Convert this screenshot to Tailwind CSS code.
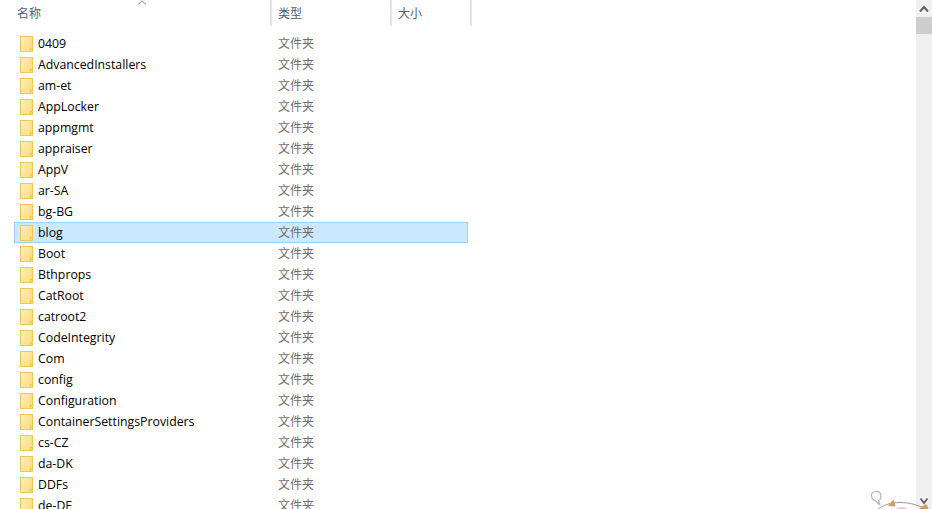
<!DOCTYPE html>
<html lang="zh-CN">
<head>
    <meta charset="UTF-8">
    <title>文件列表</title>
    <script src="https://cdn.jsdelivr.net/npm/@tailwindcss/browser@4"></script>
</head>
<body class="bg-white h-[509px] overflow-hidden relative font-['Open_Sans','Noto_Sans_CJK_SC',sans-serif] text-[12px]">
    <svg class="absolute" width="0" height="0"><defs><linearGradient id="folder-fill" x1="0" y1="0" x2="1" y2="0.600"><stop offset="0" stop-color="#fdf0c0"/><stop offset="1" stop-color="#fcdc80"/></linearGradient></defs></svg>
    <div class="flex h-[509px]">
        <div class="w-[916px] overflow-hidden">
            <!-- 表头 -->
            <div class="relative flex h-[26px] text-[#4c607a]">
                <div class="w-[272px] pl-[17px] pt-[5px] border-r-2 border-[#e5e5e5]">名称</div>
                <div class="w-[120px] pl-[6px] pt-[5px] border-r-2 border-[#e5e5e5]">类型</div>
                <div class="w-[80px] pl-[6px] pt-[5px] border-r-2 border-[#e5e5e5]">大小</div>
                <svg class="absolute left-[137px] top-0" width="10" height="5" viewBox="0 0 10 5" fill="none" stroke="#8a8f96"><path d="M1 4.5 L5 0.8 L9 4.5"/></svg>
            </div>
            <!-- 文件行 -->
            <div id="rows" class="pt-[7px]"></div>
        </div>
        <!-- 滚动条 -->
        <div class="w-[16px] bg-[#f0f0f0] relative">
            <svg class="absolute left-[3px] top-[5px]" width="10" height="8" viewBox="0 0 10 8" fill="none" stroke="#606060" stroke-width="2"><path d="M1 6.5 L5 2 L9 6.5"/></svg>
            <div class="absolute left-0 top-[17px] w-[16px] h-[17px] bg-[#cdcdcd]"></div>
        </div>
    </div>
    <!-- 右下角挂件 -->
    <svg class="absolute left-[868px] top-[490px]" width="64" height="19" viewBox="0 0 64 19" fill="none">
        <path d="M3.500 5 C3.500 1 11 0 12.500 4 C13.500 8 12 10 10.500 10.500 L12 15 L8 11 C5 10.500 3.500 8 3.500 5Z" stroke="#b8b8b8" stroke-width="1.200" fill="#fff"/>
        <path d="M10 19 C18 13 36 8 58 19" stroke="#9a9a9a" fill="none"/>
        <path d="M20 16 L25.500 9.500 L27.500 16.500 Z" fill="#d09a60"/>
        <path d="M52 18 L58 14 L61 19 L52 19 Z" fill="#d09a60"/>
        <path d="M27 19 C30 16.500 37 16.500 40 19Z" fill="#f8c8c8"/>
        <path d="M52.500 8.500 L56 13 L59.500 8.500" stroke="#606060" stroke-width="1.800"/>
    </svg>

    <script>
        // 文件夹列表
        const names = ['0409', 'AdvancedInstallers', 'am-et', 'AppLocker', 'appmgmt', 'appraiser', 'AppV', 'ar-SA', 'bg-BG', 'blog', 'Boot', 'Bthprops', 'CatRoot', 'catroot2', 'CodeIntegrity', 'Com', 'config', 'Configuration', 'ContainerSettingsProviders', 'cs-CZ', 'da-DK', 'DDFs', 'de-DE'];
        const folderIcon = `<svg class="shrink-0" width="13" height="16" viewBox="0 0 13 16"><rect x="0.500" y="0.500" width="12" height="15" fill="url(#folder-fill)" stroke="#f0c850"/><path d="M10.500 15.500 V12.500 H12.500" fill="none" stroke="#f0c850"/></svg>`;

        document.getElementById('rows').innerHTML = names.map(name => {
            const rowClass = name === 'blog'
                ? 'bg-[#cce8ff] border-[#99d1ff]'
                : 'border-transparent';
            return `<div class="flex items-center h-[21px] w-[454px] ml-[14px] border ${rowClass}">
                <span class="w-[5px]"></span>${folderIcon}
                <span class="w-[245px] pl-[5px] pt-[2px] text-black text-[12.3px] truncate">${name}</span>
                <span class="text-[#6d6d6d]">文件夹</span>
            </div>`;
        }).join('');
    </script>
</body>
</html>
